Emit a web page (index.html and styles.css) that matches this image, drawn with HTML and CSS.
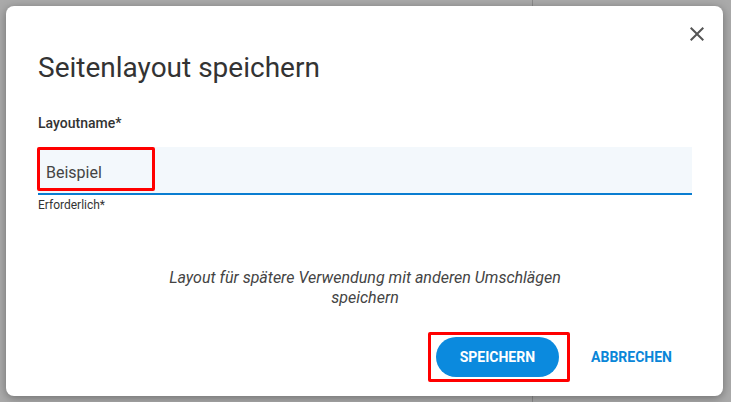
FILE: index.html
```html
<!DOCTYPE html>
<html lang="de">
<head>
    <meta charset="UTF-8">
    <meta name="viewport" content="width=device-width, initial-scale=1.0">
    <title>Seitenlayout speichern</title>
    <link rel="stylesheet" href="styles.css">
</head>
<body>
    <div class="dialog">
        <button type="button" class="close-btn" aria-label="Schließen">
            <svg width="24" height="24" viewBox="0 0 24 24"><path d="M19 6.41L17.59 5 12 10.59 6.41 5 5 6.41 10.59 12 5 17.59 6.41 19 12 13.41 17.59 19 19 17.59 13.41 12z" fill="#555"/></svg>
        </button>
        <h1 class="title">Seitenlayout speichern</h1>

        <label class="field-label" for="layoutName">Layoutname*</label>
        <div class="field">
            <input type="text" id="layoutName" value="Beispiel">
            <span class="mark mark-input"></span>
        </div>
        <span class="hint">Erforderlich*</span>

        <p class="description">Layout für spätere Verwendung mit anderen Umschlägen speichern</p>

        <div class="actions">
            <div class="save-wrap">
                <button type="button" class="btn-primary">SPEICHERN</button>
                <span class="mark mark-save"></span>
            </div>
            <button type="button" class="btn-text">ABBRECHEN</button>
        </div>
    </div>
</body>
</html>
```

FILE: styles.css
```css
body {
    margin: 0;
    height: 402px;
    font-family: Roboto, "Liberation Sans", sans-serif;
    background: linear-gradient(to right, #aaaaaa 532px, #8c8c8c 532px, #8c8c8c 533px, #aaaaaa 533px);
    overflow: hidden;
}

.dialog {
    position: relative;
    box-sizing: border-box;
    width: 717px;
    height: 390px;
    margin: 6px;
    padding: 46px 31px 19px 32px;
    background-color: #fff;
    border-radius: 8px;
    box-shadow: 0 2px 10px rgba(0, 0, 0, 0.35);
    display: flex;
    flex-direction: column;
}

.close-btn {
    position: absolute;
    top: 16px;
    right: 14px;
    width: 24px;
    height: 24px;
    padding: 0;
    border: none;
    background: none;
    cursor: pointer;
}

.close-btn svg {
    display: block;
}

.title {
    margin: 0;
    font-size: 28px;
    line-height: 32px;
    font-weight: 400;
    color: #333;
}

.field-label {
    margin-top: 29px;
    font-size: 14px;
    line-height: 20px;
    font-weight: 500;
    color: #333;
}

.field {
    position: relative;
    margin-top: 14px;
}

.field input {
    display: block;
    box-sizing: border-box;
    width: 100%;
    height: 48px;
    padding: 4px 8px 0;
    border: none;
    border-bottom: 2px solid #0a7dd1;
    background-color: #f3f8fc;
    font-family: inherit;
    font-size: 16px;
    color: #444;
    outline: none;
}

.hint {
    margin-top: 2px;
    font-size: 12px;
    line-height: 16px;
    color: #333;
}

.description {
    width: 430px;
    margin: 55px auto 0;
    text-align: center;
    font-size: 16px;
    line-height: 20px;
    font-style: italic;
    color: #444;
}

.actions {
    margin-top: auto;
    padding-right: 4px;
    display: flex;
    justify-content: flex-end;
    align-items: center;
    gap: 16px;
}

.save-wrap {
    position: relative;
}

.btn-primary {
    display: block;
    height: 40px;
    padding: 0 24px;
    border: none;
    border-radius: 20px;
    background-color: #0b8ade;
    color: #fff;
    font-family: inherit;
    font-size: 14px;
    font-weight: 700;
    cursor: pointer;
}

.btn-text {
    height: 40px;
    padding: 0 16px;
    border: none;
    background: none;
    color: #0a86d8;
    font-family: inherit;
    font-size: 14px;
    font-weight: 700;
    cursor: pointer;
}

/* red highlight boxes */
.mark {
    position: absolute;
    box-sizing: border-box;
    border: 3px solid #ff0000;
    border-radius: 2px;
    pointer-events: none;
}

.mark-input {
    left: -1px;
    top: 0;
    width: 118px;
    height: 44px;
}

.mark-save {
    left: -8px;
    top: -5px;
    width: 142px;
    height: 50px;
}
```
